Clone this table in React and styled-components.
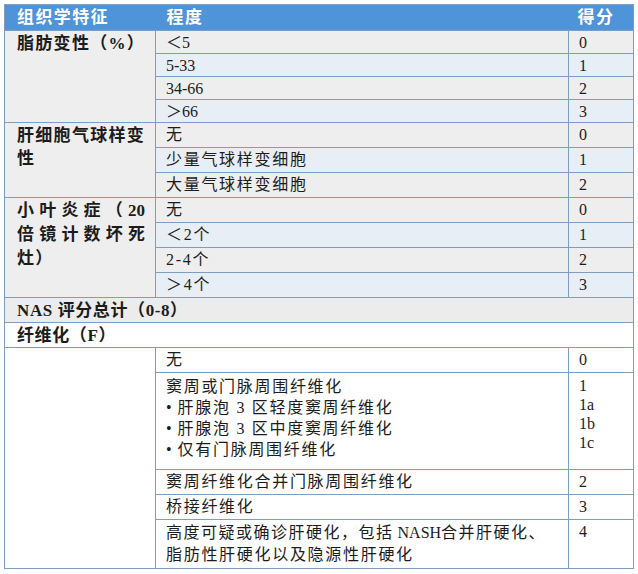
import React from 'react';
import styled, { createGlobalStyle } from 'styled-components';

const GlobalStyle = createGlobalStyle`
  body {
    margin: 0;
    background: #ffffff;
    color: #1c1c1c;
    font-family: "Liberation Serif", "Noto Sans CJK SC", serif;
  }
`;

const LINE = '#7f9dc0';

const Page = styled.div`
  padding: 4px 0 0 4px;
`;

const Table = styled.table`
  border-collapse: collapse;
  table-layout: fixed;
  width: 629px;
  border: 1px solid ${LINE};
`;

const Row = styled.tr`
  height: ${props => props.$h || 25}px;
`;

const HeadCell = styled.th`
  background: #4f93d8;
  color: #ffffff;
  font-family: "Liberation Serif", "Noto Sans CJK SC", serif;
  font-weight: 700;
  font-size: 17px;
  line-height: 20px;
  letter-spacing: 1.4px;
  text-align: left;
  padding: 0 ${props => props.$pad || 11}px;
  border-bottom: 1px solid ${LINE};
  height: 25px;
`;

const LabelCell = styled.td`
  background: ${props => props.$bg || '#eeeeee'};
  border: 1px solid ${LINE};
  vertical-align: top;
  padding: 1px 6px 0 12px;
  font-weight: 700;
  font-size: 17px;
  line-height: 23px;
  letter-spacing: 1.3px;
`;

const Line = styled.div`
  padding-right: 4px;
  text-align: ${props => (props.$justify ? 'justify' : 'left')};
  text-align-last: ${props => (props.$justify ? 'justify' : 'left')};
  letter-spacing: ${props => (props.$justify ? '0' : 'inherit')};
  line-height: 24px;
`;

const Cell = styled.td`
  background: ${props => props.$bg || '#ffffff'};
  border: 1px solid ${LINE};
  vertical-align: top;
  padding: ${props => props.$top || 2}px 10px 0 10px;
  font-size: 16px;
  line-height: ${props => props.$lh || 19}px;
  letter-spacing: ${props => (props.$cjk ? 1.7 : 0)}px;
`;

const ScoreCell = styled.td`
  background: ${props => props.$bg || '#ffffff'};
  border: 1px solid ${LINE};
  vertical-align: top;
  padding: ${props => props.$top || 2}px 9px 0 10px;
  font-size: 16px;
  line-height: ${props => props.$lh || 19}px;
`;

const SpanCell = styled.td`
  background: ${props => props.$bg || '#ffffff'};
  border: 1px solid ${LINE};
  padding: 1px 12px 0 12px;
  font-weight: 700;
  font-size: 17px;
  line-height: 20px;
  letter-spacing: 0.6px;
`;

const Bullet = styled.span`
  letter-spacing: 0;
  margin-right: 6px;
`;

const GRAY = '#eeeeee';
const TINT = '#e8eef6';

const groups = [
  {
    label: '脂肪变性（%）',
    h: 23,
    rows: [
      ['＜5', '0'],
      ['5-33', '1'],
      ['34-66', '2'],
      ['＞66', '3'],
    ],
  },
  {
    label: '肝细胞气球样变性',
    h: 25,
    cjk: true,
    rows: [
      ['无', '0'],
      ['少量气球样变细胞', '1'],
      ['大量气球样变细胞', '2'],
    ],
  },
  {
    lines: ['小叶炎症（20', '倍镜计数坏死', '灶）'],
    h: 25,
    cjk: true,
    rows: [
      ['无', '0'],
      ['＜2个', '1'],
      ['2-4个', '2'],
      ['＞4个', '3'],
    ],
  },
];

const renderLabel = g => {
  if (!g.lines) return g.label;
  return g.lines.map((l, i) => (
    <Line key={i} $justify={i < g.lines.length - 1}>
      {l}
    </Line>
  ));
};

const Group = ({ g }) => (
  <>
    {g.rows.map(([text, score], i) => {
      const bg = i % 2 ? TINT : GRAY;
      return (
        <Row key={i} $h={g.h}>
          {i === 0 && <LabelCell rowSpan={g.rows.length}>{renderLabel(g)}</LabelCell>}
          <Cell $bg={bg} $cjk={g.cjk}>{text}</Cell>
          <ScoreCell $bg={bg}>{score}</ScoreCell>
        </Row>
      );
    })}
  </>
);

const App = () => (
  <Page>
    <GlobalStyle />
    <Table>
      <colgroup>
        <col style={{ width: 151 }} />
        <col style={{ width: 413 }} />
        <col style={{ width: 65 }} />
      </colgroup>
      <thead>
        <Row>
          <HeadCell $pad={12}>组织学特征</HeadCell>
          <HeadCell>程度</HeadCell>
          <HeadCell $pad={9}>得分</HeadCell>
        </Row>
      </thead>
      <tbody>
        {groups.map((g, i) => (
          <Group key={i} g={g} />
        ))}
        <Row>
          <SpanCell colSpan={3} $bg="#ececec">NAS 评分总计（0-8）</SpanCell>
        </Row>
        <Row>
          <SpanCell colSpan={3}>纤维化（F）</SpanCell>
        </Row>
        <Row>
          <LabelCell rowSpan={5} $bg="#ffffff" />
          <Cell $cjk>无</Cell>
          <ScoreCell>0</ScoreCell>
        </Row>
        <Row $h={97}>
          <Cell $cjk $top={3} $lh={21}>
            窦周或门脉周围纤维化
            <br />
            <Bullet>•</Bullet>肝腺泡 3 区轻度窦周纤维化
            <br />
            <Bullet>•</Bullet>肝腺泡 3 区中度窦周纤维化
            <br />
            <Bullet>•</Bullet>仅有门脉周围纤维化
          </Cell>
          <ScoreCell $top={3} $lh={19}>
            1
            <br />
            1a
            <br />
            1b
            <br />
            1c
          </ScoreCell>
        </Row>
        <Row>
          <Cell $cjk>窦周纤维化合并门脉周围纤维化</Cell>
          <ScoreCell>2</ScoreCell>
        </Row>
        <Row>
          <Cell $cjk>桥接纤维化</Cell>
          <ScoreCell>3</ScoreCell>
        </Row>
        <Row $h={49}>
          <Cell $lh={22}>
            <span style={{ letterSpacing: '1.5px' }}>高度可疑或确诊肝硬化，包括</span>
            {' '}NASH
            <span style={{ letterSpacing: '1.5px' }}>合并肝硬化、</span>
            <br />
            <span style={{ letterSpacing: '1.7px' }}>脂肪性肝硬化以及隐源性肝硬化</span>
          </Cell>
          <ScoreCell>4</ScoreCell>
        </Row>
      </tbody>
    </Table>
  </Page>
);

export default App;
